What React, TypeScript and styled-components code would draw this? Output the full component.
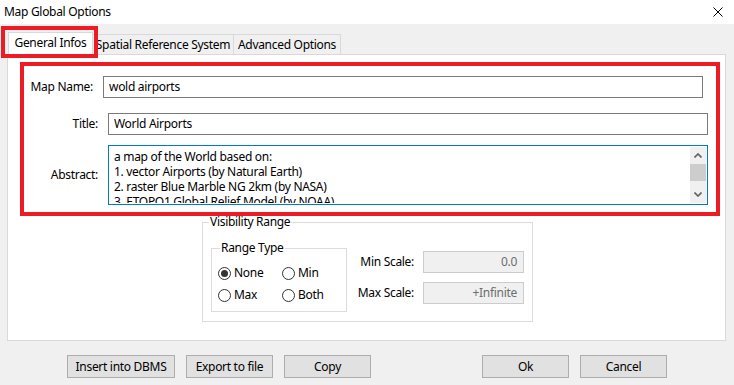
import styled, { createGlobalStyle } from "styled-components"

const GlobalStyle = createGlobalStyle`
  html, body {
    margin: 0;
    padding: 0;
    background: #f0f0f0;
  }
  body {
    font-family: "Noto Sans", "Segoe UI", sans-serif;
    font-size: 12px;
    letter-spacing: -0.3px;
    color: #000;
  }
  * { box-sizing: border-box; }
`

// FENETRE
const Dialog = styled.div`
  position: relative;
  width: 734px;
  height: 385px;
  background: #f0f0f0;
  display: flex;
  flex-direction: column;
  overflow: hidden;
`
const TitleBar = styled.div`
  height: 24px;
  background: #fff;
  display: flex;
  align-items: center;
  justify-content: space-between;
  padding: 0 11px 0 4px;
  line-height: 16px;
`
const CloseIcon = styled.svg`
  width: 10px;
  height: 10px;
  display: block;
`

// ONGLETS
const TabStrip = styled.div`
  height: 30px;
  display: flex;
  align-items: flex-end;
  padding-left: 8px;
`
const Tab = styled.div<{ $active?: boolean; $width: number }>`
  width: ${(p) => p.$width}px;
  height: ${(p) => (p.$active ? 23 : 20)}px;
  margin-bottom: ${(p) => (p.$active ? -1 : 0)}px;
  background: ${(p) => (p.$active ? "#fff" : "#f0f0f0")};
  border: 1px solid #d9d9d9;
  border-bottom: none;
  border-left-width: ${(p) => (p.$active ? 1 : 0)}px;
  display: flex;
  align-items: center;
  justify-content: center;
  line-height: 16px;
  white-space: nowrap;
  position: relative;
  z-index: 1;
  padding-bottom: ${(p) => (p.$active ? 2 : 0)}px;
`
const Pane = styled.div`
  margin-left: 7px;
  width: 719px;
  height: 287px;
  background: #fff;
  border: 1px solid #d9d9d9;
  display: flex;
  flex-direction: column;
  padding: 21px 0 0 20px;
`

// FORMULAIRE
const FieldRow = styled.div<{ $shift?: number; $gap?: number }>`
  display: grid;
  grid-template-columns: 70px 600px;
  column-gap: 10px;
  align-items: center;
  margin-left: ${(p) => p.$shift ?? 0}px;
  margin-top: ${(p) => p.$gap ?? 0}px;
`
const FieldLabel = styled.label`
  text-align: right;
  line-height: 16px;
  white-space: nowrap;
`
const TextInput = styled.div`
  height: 22px;
  border: 1px solid #7a7a7a;
  background: #fff;
  padding: 0 5px;
  display: flex;
  align-items: center;
  line-height: 16px;
`
const TextArea = styled.div`
  height: 60px;
  border: 1px solid #0078d7;
  background: #fff;
  display: flex;
  padding: 1px;
`
const TextAreaContent = styled.div`
  flex: 1;
  overflow: hidden;
  padding: 2px 4px;
  line-height: 15px;
  white-space: nowrap;
`
const ScrollBar = styled.div`
  width: 16px;
  background: #f0f0f0;
  display: flex;
  flex-direction: column;
`
const ScrollArrow = styled.div`
  height: 17px;
  display: flex;
  align-items: center;
  justify-content: center;
`
const ScrollThumb = styled.div`
  height: 17px;
  background: #cdcdcd;
`
const ScrollTrack = styled.div`
  flex: 1;
`

// PLAGE DE VISIBILITE
const GroupBox = styled.fieldset<{ $width: number; $pad: string }>`
  margin: 0;
  width: ${(p) => p.$width}px;
  min-width: 0;
  border: 1px solid #dcdcdc;
  padding: ${(p) => p.$pad};
`
const GroupTitle = styled.legend<{ $offset: number }>`
  padding: 0 1px;
  margin-left: ${(p) => p.$offset}px;
  line-height: 16px;
`
const VisibilityBox = styled(GroupBox)`
  margin: 9px 0 0 174px;
  display: flex;
  align-items: flex-start;
`
const RangeTypeBox = styled(GroupBox)`
  margin-top: 10px;
`
const RadioGrid = styled.div`
  display: grid;
  grid-template-columns: 64px auto;
  grid-auto-rows: 22px;
  align-items: center;
`
const RadioOption = styled.div`
  display: flex;
  align-items: center;
  gap: 3px;
  line-height: 16px;
`
const RadioCircle = styled.span<{ $checked?: boolean }>`
  width: 13px;
  height: 13px;
  border-radius: 50%;
  border: 1px solid #333;
  background: #fff;
  display: flex;
  align-items: center;
  justify-content: center;

  &::after {
    content: "";
    width: 7px;
    height: 7px;
    border-radius: 50%;
    background: #333;
    display: ${(p) => (p.$checked ? "block" : "none")};
  }
`
const ScaleGrid = styled.div`
  margin: 21px 0 0 auto;
  display: grid;
  grid-template-columns: auto 101px;
  grid-auto-rows: 22px;
  column-gap: 9px;
  row-gap: 9px;
  align-items: center;
  justify-items: end;
`
const ScaleInput = styled.div`
  width: 101px;
  height: 22px;
  border: 1px solid #cccccc;
  background: #f0f0f0;
  color: #6d6d6d;
  display: flex;
  align-items: center;
  justify-content: flex-end;
  padding-right: 6px;
  line-height: 16px;
`

// BOUTONS
const ButtonBar = styled.div`
  margin-top: 14px;
  display: flex;
  justify-content: space-between;
  padding: 0 67px;
`
const ButtonGroup = styled.div`
  display: flex;
  gap: 11px;
`
const Button = styled.button<{ $width?: number }>`
  width: ${(p) => p.$width ?? 87}px;
  height: 23px;
  padding: 0;
  background: #e1e1e1;
  border: 1px solid #adadad;
  font: inherit;
  letter-spacing: inherit;
  color: #000;
  line-height: 16px;
`

// ANNOTATIONS ROUGES
const Highlight = styled.div<{ $x: number; $y: number; $w: number; $h: number }>`
  position: absolute;
  left: ${(p) => p.$x}px;
  top: ${(p) => p.$y}px;
  width: ${(p) => p.$w}px;
  height: ${(p) => p.$h}px;
  border: 4px solid #ed1c24;
  pointer-events: none;
  z-index: 5;
`

function Chevron({ up }: { up?: boolean }) {
  return (
    <svg width="8" height="5" viewBox="0 0 8 5">
      <polyline
        points={up ? "0.5,4.5 4,1 7.5,4.5" : "0.5,0.5 4,4 7.5,0.5"}
        fill="none"
        stroke="#606060"
        strokeWidth="1.6"
      />
    </svg>
  )
}

function Radio({ label, checked }: { label: string; checked?: boolean }) {
  return (
    <RadioOption>
      <RadioCircle $checked={checked} />
      {label}
    </RadioOption>
  )
}

function App() {
  return (
    <Dialog>
      <GlobalStyle />
      <TitleBar>
        <span>Map Global Options</span>
        <CloseIcon viewBox="0 0 10 10">
          <path d="M0.5 0.5 L9.5 9.5 M9.5 0.5 L0.5 9.5" stroke="#000" strokeWidth="1" />
        </CloseIcon>
      </TitleBar>

      <TabStrip>
        <Tab $active $width={85}>General Infos</Tab>
        <Tab $width={141}>Spatial Reference System</Tab>
        <Tab $width={107}>Advanced Options</Tab>
      </TabStrip>

      <Pane>
        <FieldRow $shift={-5}>
          <FieldLabel>Map Name:</FieldLabel>
          <TextInput>wold airports</TextInput>
        </FieldRow>
        <FieldRow $gap={15}>
          <FieldLabel>Title:</FieldLabel>
          <TextInput>World Airports</TextInput>
        </FieldRow>
        <FieldRow $gap={10}>
          <FieldLabel>Abstract:</FieldLabel>
          <TextArea>
            <TextAreaContent>
              a map of the World based on:
              <br />
              1. vector Airports (by Natural Earth)
              <br />
              2. raster Blue Marble NG 2km (by NASA)
              <br />
              3. ETOPO1 Global Relief Model (by NOAA)
            </TextAreaContent>
            <ScrollBar>
              <ScrollArrow>
                <Chevron up />
              </ScrollArrow>
              <ScrollThumb />
              <ScrollTrack />
              <ScrollArrow>
                <Chevron />
              </ScrollArrow>
            </ScrollBar>
          </TextArea>
        </FieldRow>

        <VisibilityBox $width={331} $pad="0 8px 9px 8px">
          <GroupTitle $offset={-2}>Visibility Range</GroupTitle>
          <RangeTypeBox $width={136} $pad="6px 6px 5px 6px">
            <GroupTitle $offset={2}>Range Type</GroupTitle>
            <RadioGrid>
              <Radio label="None" checked />
              <Radio label="Min" />
              <Radio label="Max" />
              <Radio label="Both" />
            </RadioGrid>
          </RangeTypeBox>
          <ScaleGrid>
            <FieldLabel>Min Scale:</FieldLabel>
            <ScaleInput>0.0</ScaleInput>
            <FieldLabel>Max Scale:</FieldLabel>
            <ScaleInput>+Infinite</ScaleInput>
          </ScaleGrid>
        </VisibilityBox>
      </Pane>

      <ButtonBar>
        <ButtonGroup>
          <Button $width={108}>Insert into DBMS</Button>
          <Button>Export to file</Button>
          <Button>Copy</Button>
        </ButtonGroup>
        <ButtonGroup>
          <Button>Ok</Button>
          <Button>Cancel</Button>
        </ButtonGroup>
      </ButtonBar>

      <Highlight $x={1} $y={26} $w={97} $h={32} />
      <Highlight $x={20} $y={62} $w={700} $h={154} />
    </Dialog>
  )
}

export default App
